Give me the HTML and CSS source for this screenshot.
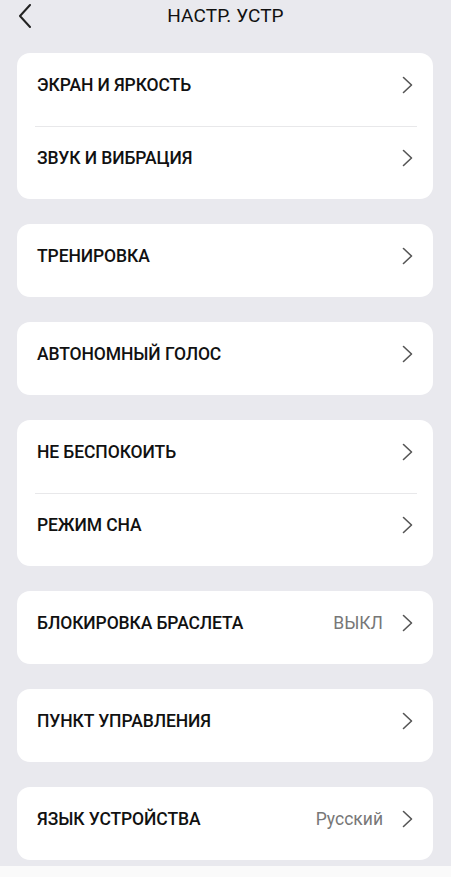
FILE: index.html
```html
<!DOCTYPE html>
<html lang="ru">
<head>
    <meta charset="UTF-8">
    <meta name="viewport" content="width=device-width, initial-scale=1.0">
    <title>Настр. устр</title>
    <link rel="stylesheet" href="styles.css">
</head>
<body>
    <div class="header">
        <svg class="back" width="14" height="24" viewBox="0 0 14 24">
            <path d="M12 1 L2 12 L12 23" fill="none" stroke="#222" stroke-width="2" stroke-linecap="round" stroke-linejoin="round"/>
        </svg>
        <h1>НАСТР. УСТР</h1>
    </div>

    <div class="list">
        <div class="card">
            <div class="row"><span class="label">ЭКРАН И ЯРКОСТЬ</span><svg class="arrow" width="11" height="18" viewBox="0 0 11 18"><path d="M1.5 1.5 L9.5 9 L1.5 16.5"/></svg></div>
            <div class="row"><span class="label">ЗВУК И ВИБРАЦИЯ</span><svg class="arrow" width="11" height="18" viewBox="0 0 11 18"><path d="M1.5 1.5 L9.5 9 L1.5 16.5"/></svg></div>
        </div>
        <div class="card">
            <div class="row"><span class="label">ТРЕНИРОВКА</span><svg class="arrow" width="11" height="18" viewBox="0 0 11 18"><path d="M1.5 1.5 L9.5 9 L1.5 16.5"/></svg></div>
        </div>
        <div class="card">
            <div class="row"><span class="label">АВТОНОМНЫЙ ГОЛОС</span><svg class="arrow" width="11" height="18" viewBox="0 0 11 18"><path d="M1.5 1.5 L9.5 9 L1.5 16.5"/></svg></div>
        </div>
        <div class="card">
            <div class="row"><span class="label">НЕ БЕСПОКОИТЬ</span><svg class="arrow" width="11" height="18" viewBox="0 0 11 18"><path d="M1.5 1.5 L9.5 9 L1.5 16.5"/></svg></div>
            <div class="row"><span class="label">РЕЖИМ СНА</span><svg class="arrow" width="11" height="18" viewBox="0 0 11 18"><path d="M1.5 1.5 L9.5 9 L1.5 16.5"/></svg></div>
        </div>
        <div class="card">
            <div class="row"><span class="label">БЛОКИРОВКА БРАСЛЕТА</span><span class="value">ВЫКЛ</span><svg class="arrow" width="11" height="18" viewBox="0 0 11 18"><path d="M1.5 1.5 L9.5 9 L1.5 16.5"/></svg></div>
        </div>
        <div class="card">
            <div class="row"><span class="label">ПУНКТ УПРАВЛЕНИЯ</span><svg class="arrow" width="11" height="18" viewBox="0 0 11 18"><path d="M1.5 1.5 L9.5 9 L1.5 16.5"/></svg></div>
        </div>
        <div class="card">
            <div class="row"><span class="label">ЯЗЫК УСТРОЙСТВА</span><span class="value">Русский</span><svg class="arrow" width="11" height="18" viewBox="0 0 11 18"><path d="M1.5 1.5 L9.5 9 L1.5 16.5"/></svg></div>
        </div>
    </div>

    <div class="bottom"></div>
</body>
</html>
```

FILE: styles.css
```css
*{
    padding: 0px;
    margin: 0px;
    box-sizing: border-box;
}
body{
    background-color: #e9e9ee;
    font-family: Roboto, 'Noto Sans', sans-serif;
    color: #111;
    height: 877px;
    overflow: hidden;
}
.header{
    height: 53px;
    display: flex;
    align-items: flex-start;
    justify-content: center;
    position: relative;
}
.header .back{
    position: absolute;
    left: 18px;
    top: 4px;
}
.header h1{
    font-size: 19px;
    font-weight: 400;
    margin-top: 4px;
    letter-spacing: 0.1px;
}
.list{
    display: flex;
    flex-direction: column;
    gap: 25px;
    padding: 0 18px 0 17px;
}
.card{
    background-color: #fff;
    border-radius: 13px;
    padding: 0 20px 0 20px;
}
.row{
    height: 73px;
    display: flex;
    align-items: center;
    padding-bottom: 10px;
    font-size: 17.5px;
}
.row + .row{
    border-top: 1px solid #e8e8ea;
    margin: 0 -4px 0 -2px;
    padding: 0 4px 10px 2px;
}
.row .label{
    flex: 1;
    font-weight: 500;
    letter-spacing: -0.1px;
}
.row .value{
    color: #777;
    margin-right: 19px;
}
.arrow{
    fill: none;
    stroke: #555;
    stroke-width: 1.6;
    stroke-linecap: round;
    stroke-linejoin: round;
}
.bottom{
    position: absolute;
    left: 0;
    right: 0;
    top: 866px;
    height: 11px;
    background-color: #fafafa;
}
```
